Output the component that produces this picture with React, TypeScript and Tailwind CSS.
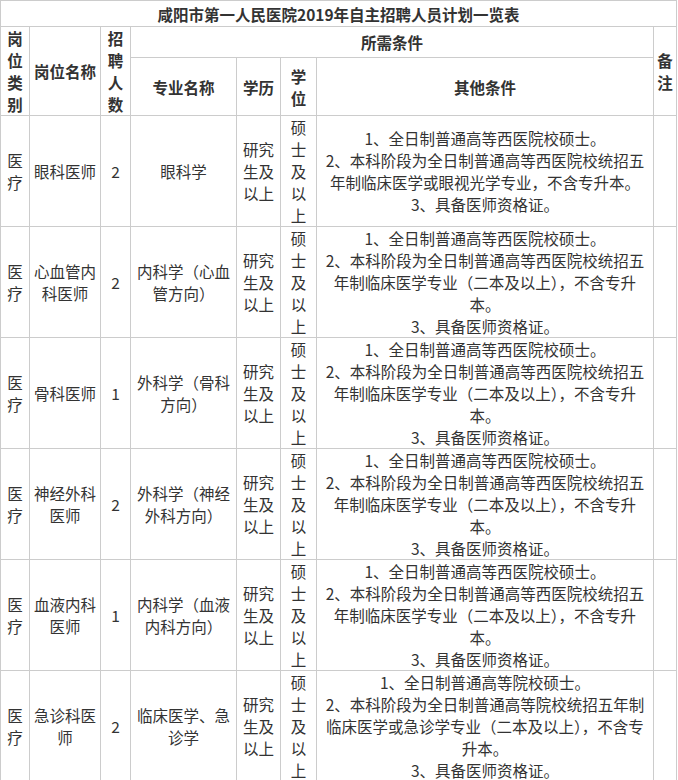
import React from 'react';

type Row = {
  type: string;
  name: string;
  count: string;
  major: string;
  edu: string;
  degree: string;
  conditions: string[];
};

const stdCond = [
  '1、全日制普通高等西医院校硕士。',
  '2、本科阶段为全日制普通高等西医院校统招五年制临床医学专业（二本及以上），不含专升本。',
  '3、具备医师资格证。',
];

const rows: Row[] = [
  {
    type: '医疗',
    name: '眼科医师',
    count: '2',
    major: '眼科学',
    edu: '研究生及以上',
    degree: '硕士及以上',
    conditions: [
      '1、全日制普通高等西医院校硕士。',
      '2、本科阶段为全日制普通高等西医院校统招五年制临床医学或眼视光学专业，不含专升本。',
      '3、具备医师资格证。',
    ],
  },
  { type: '医疗', name: '心血管内科医师', count: '2', major: '内科学（心血管方向）', edu: '研究生及以上', degree: '硕士及以上', conditions: stdCond },
  { type: '医疗', name: '骨科医师', count: '1', major: '外科学（骨科方向）', edu: '研究生及以上', degree: '硕士及以上', conditions: stdCond },
  { type: '医疗', name: '神经外科医师', count: '2', major: '外科学（神经外科方向）', edu: '研究生及以上', degree: '硕士及以上', conditions: stdCond },
  { type: '医疗', name: '血液内科医师', count: '1', major: '内科学（血液内科方向）', edu: '研究生及以上', degree: '硕士及以上', conditions: stdCond },
  {
    type: '医疗',
    name: '急诊科医师',
    count: '2',
    major: '临床医学、急诊学',
    edu: '研究生及以上',
    degree: '硕士及以上',
    conditions: [
      '1、全日制普通高等院校硕士。',
      '2、本科阶段为全日制普通高等院校统招五年制临床医学或急诊学专业（二本及以上），不含专升本。',
      '3、具备医师资格证。',
    ],
  },
];

const cell = 'border border-[#cccccc] px-[3px] py-0 text-center align-middle';

export default function App() {
  return (
    <div
      className="bg-white text-[#333333] text-[15.5px] leading-[22px]"
      style={{ fontFamily: '"Noto Sans CJK SC", "Noto Sans", sans-serif' }}
    >
      <table className="table-fixed border-collapse w-[676px]">
        <colgroup>
          <col className="w-[29px]" />
          <col className="w-[71px]" />
          <col className="w-[30px]" />
          <col className="w-[106px]" />
          <col className="w-[44px]" />
          <col className="w-[36px]" />
          <col className="w-[337px]" />
          <col className="w-[23px]" />
        </colgroup>
        <tbody>
          <tr className="h-[26px]">
            <td colSpan={8} className={`${cell} font-bold`}>
              咸阳市第一人民医院2019年自主招聘人员计划一览表
            </td>
          </tr>
          <tr className="h-[31px] font-bold">
            <td rowSpan={2} className={cell}>岗位类别</td>
            <td rowSpan={2} className={cell}>岗位名称</td>
            <td rowSpan={2} className={cell}>招聘人数</td>
            <td colSpan={4} className={cell}>所需条件</td>
            <td rowSpan={2} className={cell}>备注</td>
          </tr>
          <tr className="h-[58px] font-bold">
            <td className={cell}>专业名称</td>
            <td className={cell}>学历</td>
            <td className={cell}>学位</td>
            <td className={cell}>其他条件</td>
          </tr>
          {rows.map((r, i) => (
            <tr key={i} className="h-[111px]">
              <td className={cell}>{r.type}</td>
              <td className={cell}>{r.name}</td>
              <td className={cell}>{r.count}</td>
              <td className={cell}>{r.major}</td>
              <td className={cell}>{r.edu}</td>
              <td className={cell}>{r.degree}</td>
              <td className={cell}>
                {r.conditions.map((c, j) => (
                  <p key={j}>{c}</p>
                ))}
              </td>
              <td className={cell}></td>
            </tr>
          ))}
        </tbody>
      </table>
    </div>
  );
}
